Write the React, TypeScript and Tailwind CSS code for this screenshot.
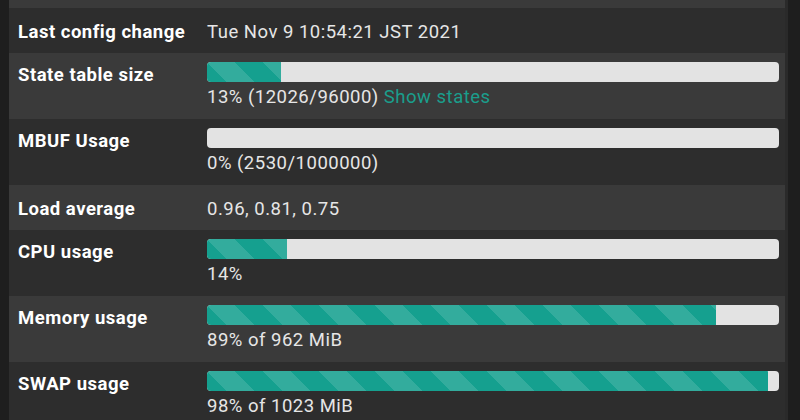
import React from "react";

type Row = {
  label: string;
  value: string;
  bar?: number;
  link?: string;
};

const rows: Row[] = [
  { label: "Last config change", value: "Tue Nov 9 10:54:21 JST 2021" },
  { label: "State table size", value: "13% (12026/96000)", bar: 13, link: "Show states" },
  { label: "MBUF Usage", value: "0% (2530/1000000)", bar: 0 },
  { label: "Load average", value: "0.96, 0.81, 0.75" },
  { label: "CPU usage", value: "14%", bar: 14 },
  { label: "Memory usage", value: "89% of 962 MiB", bar: 89 },
  { label: "SWAP usage", value: "98% of 1023 MiB", bar: 98 },
];

const stripes =
  "linear-gradient(45deg, rgba(255,255,255,.13) 25%, transparent 25%, transparent 50%, rgba(255,255,255,.13) 50%, rgba(255,255,255,.13) 75%, transparent 75%, transparent)";

function Bar({ pct }: { pct: number }) {
  return (
    <div className="h-[20px] w-full overflow-hidden rounded-[4px] bg-[#e3e3e3]">
      <div
        className="h-full bg-[#15a08f] bg-[length:56px_56px]"
        style={{ width: `${pct}%`, backgroundImage: stripes }}
      />
    </div>
  );
}

export default function App() {
  return (
    <div
      className="h-[420px] w-[800px] overflow-hidden bg-[#1e1e1e] pl-[9px] pr-[12px]"
      style={{ fontFamily: "Roboto, 'Liberation Sans', sans-serif" }}
    >
      <div className="h-full border-r-[3px] border-[#2a2a2a]">
        <div className="h-[8px] bg-[#3a3a3a]" />
        {rows.map((r, i) => (
          <div
            key={r.label}
            className={`flex ${i % 2 === 0 ? "bg-[#2d2d2d]" : "bg-[#3a3a3a]"} ${
              r.bar !== undefined ? "pt-[9px] pb-[10px]" : "pt-[13px] pb-[9px]"
            }`}
          >
            <div
              className={`w-[190px] shrink-0 pl-[9px] text-[18.5px] leading-[23px] font-bold tracking-[0.5px] text-white ${
                r.bar !== undefined ? "pt-[2px]" : ""
              }`}
            >
              {r.label}
            </div>
            <div className="flex-1 pl-[8px] pr-[6px] text-[18.5px] tracking-[0.5px] text-[#e6e6e6]">
              {r.bar !== undefined ? (
                <>
                  <Bar pct={r.bar} />
                  <div className="mt-[3px] leading-[24px]">
                    {r.value}
                    {r.link && <span className="ml-[5px] text-[#1a9e8c]">{r.link}</span>}
                  </div>
                </>
              ) : (
                <div className="leading-[23px]">{r.value}</div>
              )}
            </div>
          </div>
        ))}
      </div>
    </div>
  );
}
